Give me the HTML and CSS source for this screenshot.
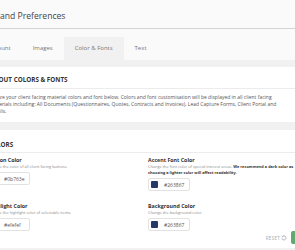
FILE: index.html
```html
<!DOCTYPE html>
<html lang="en">
<head>
    <meta charset="UTF-8">
    <meta name="viewport" content="width=device-width, initial-scale=1.0">
    <title>Brand Preferences</title>
    <link rel="stylesheet" href="styles.css">
</head>
<body>
    <div class="page">
        <div class="page-header">
            <h1>Brand Preferences</h1>
        </div>

        <div class="tabs">
            <a class="tab">Account</a>
            <a class="tab">Images</a>
            <a class="tab active">Color &amp; Fonts</a>
            <a class="tab">Text</a>
        </div>

        <div class="card about-card">
            <h2 class="card-title">About Colors &amp; Fonts</h2>
            <p class="card-text">Stylize your client facing material colors and font below. Colors and font customisation will be displayed in all client facing materials including: All Documents (Questionnaires, Quotes, Contracts and Invoices), Lead Capture Forms, Client Portal and Emails.</p>
        </div>

        <div class="card colors-card">
            <h2 class="card-title">Colors</h2>

            <div class="color-grid">
                <div class="field">
                    <div class="field-label">Button Color</div>
                    <div class="field-desc">Change the color of all client facing buttons.</div>
                    <div class="color-input">
                        <span class="swatch swatch-green"></span>
                        <span class="color-value">#0b763e</span>
                    </div>
                </div>
                <div class="field">
                    <div class="field-label">Accent Font Color</div>
                    <div class="field-desc">Change the font color of special interest areas. <b>We recommend a dark color as choosing a lighter color will affect readability.</b></div>
                    <div class="color-input">
                        <span class="swatch swatch-navy"></span>
                        <span class="color-value">#263867</span>
                    </div>
                </div>
                <div class="field">
                    <div class="field-label">Highlight Color</div>
                    <div class="field-desc">Change the highlight color of selectable items.</div>
                    <div class="color-input">
                        <span class="swatch swatch-light"></span>
                        <span class="color-value">#efefef</span>
                    </div>
                </div>
                <div class="field">
                    <div class="field-label">Background Color</div>
                    <div class="field-desc">Change the background color.</div>
                    <div class="color-input">
                        <span class="swatch swatch-navy"></span>
                        <span class="color-value">#263867</span>
                    </div>
                </div>
            </div>

            <div class="card-footer">
                <button class="reset-btn">Reset
                    <svg width="6" height="6" viewBox="0 0 12 12" fill="none" stroke="#9a9a9a" stroke-width="1.4">
                        <path d="M3 3.2A4 4 0 1 1 2 6.5"/>
                        <path d="M1.2 1.5L3 3.4 5 2.2"/>
                    </svg>
                </button>
                <button class="save-btn">Save</button>
            </div>
        </div>
    </div>
</body>
</html>
```

FILE: styles.css
```css
body {
    margin: 0;
    font-family: 'Open Sans', 'Liberation Sans', sans-serif;
    background-color: #f1f1f1;
    color: #333;
    overflow: hidden;
}
.page {
    margin-left: -25px;
    width: 365px;
}
.page-header {
    background-color: #fafafa;
    padding: 10px 16px 6px;
    border-bottom: 1px solid #d4d4d4;
}
h1 {
    margin: 0;
    font-size: 8.6px;
    line-height: 12px;
    font-weight: 400;
    color: #444;
}
.tabs {
    display: flex;
    background-color: #fafafa;
    padding: 8px 0 0 2px;
}
.tab {
    padding: 0 11px;
    height: 23px;
    line-height: 23px;
    font-size: 6px;
    color: #777;
}
.tab.active {
    background-color: #f1f1f1;
}
.card {
    background-color: white;
    margin-top: 7px;
}
.about-card {
    padding: 8px 15px 7px;
}
.colors-card {
    margin-top: 8px;
    padding: 10px 13px 4px;
}
.card-title {
    margin: 0;
    font-size: 6.3px;
    line-height: 9px;
    font-weight: 700;
    text-transform: uppercase;
    color: #333;
    padding-bottom: 4px;
    border-bottom: 1px solid #ececec;
}
.colors-card .card-title {
    padding-bottom: 3px;
}
.card-text {
    margin: 5px 0 0;
    max-width: 300px;
    font-size: 5px;
    line-height: 7px;
    color: #555;
}
.color-grid {
    display: grid;
    grid-template-columns: 160px 1fr;
    row-gap: 12px;
    padding-top: 4px;
}
.field-label {
    font-size: 5.3px;
    line-height: 7px;
    font-weight: 700;
    color: #333;
}
.field-desc {
    max-width: 146px;
    font-size: 3.9px;
    line-height: 6px;
    color: #888;
}
.field-desc b {
    color: #333;
}
.color-input {
    display: flex;
    align-items: center;
    gap: 6px;
    width: 36px;
    height: 11px;
    margin-top: 2px;
    padding: 0 2px;
    border: 1px solid #e2e2e2;
    border-radius: 2px;
}
.swatch {
    width: 7px;
    height: 7px;
    flex-shrink: 0;
    border-radius: 1px;
}
.swatch-green {
    background-color: #0b763e;
}
.swatch-navy {
    background-color: #263867;
}
.swatch-light {
    background-color: #efefef;
}
.color-value {
    font-size: 5px;
    color: #555;
}
.card-footer {
    display: flex;
    justify-content: flex-end;
    align-items: center;
    gap: 4px;
}
.reset-btn {
    display: flex;
    align-items: center;
    gap: 1px;
    background: none;
    border: none;
    padding: 0;
    font-family: inherit;
    font-size: 4.5px;
    text-transform: uppercase;
    letter-spacing: 0.3px;
    color: #aaa;
}
.save-btn {
    width: 36px;
    height: 13px;
    background-color: #62a873;
    border: none;
    border-radius: 2px;
    color: white;
    font-family: inherit;
    font-size: 4.5px;
    text-transform: uppercase;
}
```
